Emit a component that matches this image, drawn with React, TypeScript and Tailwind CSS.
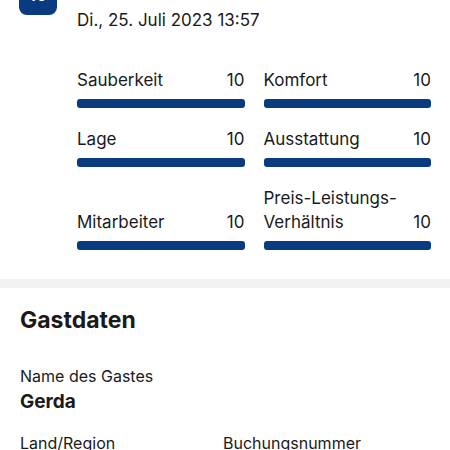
const ratings = [
  { label: "Sauberkeit", score: 10 },
  { label: "Komfort", score: 10 },
  { label: "Lage", score: 10 },
  { label: "Ausstattung", score: 10 },
  { label: "Mitarbeiter", score: 10 },
  { label: "Preis-Leistungs-\u200BVerhältnis", score: 10 },
];

function RatingBar({ label, score }: { label: string; score: number }) {
  return (
    <div className="flex flex-col justify-end">
      <div className="flex items-end justify-between text-[17px] leading-[24px]">
        <span className="max-w-[140px]">{label}</span>
        <span>{score}</span>
      </div>
      <div className="mt-[7px] h-[9px] rounded-[3px] bg-[#0a3a80]" style={{ width: `${score * 10}%` }} />
    </div>
  );
}

export default function App() {
  return (
    <div className="min-h-[450px] bg-white text-[#1a1a1a] font-['Inter','Liberation_Sans',sans-serif]">
      {/* Review header */}
      <div className="flex gap-[20px] pl-[19px] pr-[19px] pb-[29px]">
        <div className="-mt-[25px] flex h-[40px] w-[38px] shrink-0 items-end justify-center rounded-b-[8px] bg-[#0a3a80] pb-[8px] text-[17px] font-semibold leading-[24px] text-white">
          10
        </div>
        <div className="flex-1 pt-[8px]">
          <div className="text-[17px] leading-[24px]">Di., 25. Juli 2023 13:57</div>
          <div className="mt-[36px] grid grid-cols-2 gap-x-[19px] gap-y-[19px]">
            {ratings.map((r) => (
              <RatingBar key={r.label} label={r.label} score={r.score} />
            ))}
          </div>
        </div>
      </div>

      <div className="h-[9px] bg-[#f2f2f2]" />

      {/* Guest data */}
      <div className="px-[20px] pt-[17px]">
        <h2 className="text-[23px] font-bold leading-[30px]">Gastdaten</h2>
        <div className="mt-[30px] text-[16px] leading-[22px]">Name des Gastes</div>
        <div className="mt-[3px] text-[19px] font-bold leading-[24px]">Gerda</div>
        <div className="mt-[18px] grid grid-cols-[203px_1fr] text-[16px] leading-[22px]">
          <div>Land/Region</div>
          <div>Buchungsnummer</div>
        </div>
      </div>
    </div>
  );
}
